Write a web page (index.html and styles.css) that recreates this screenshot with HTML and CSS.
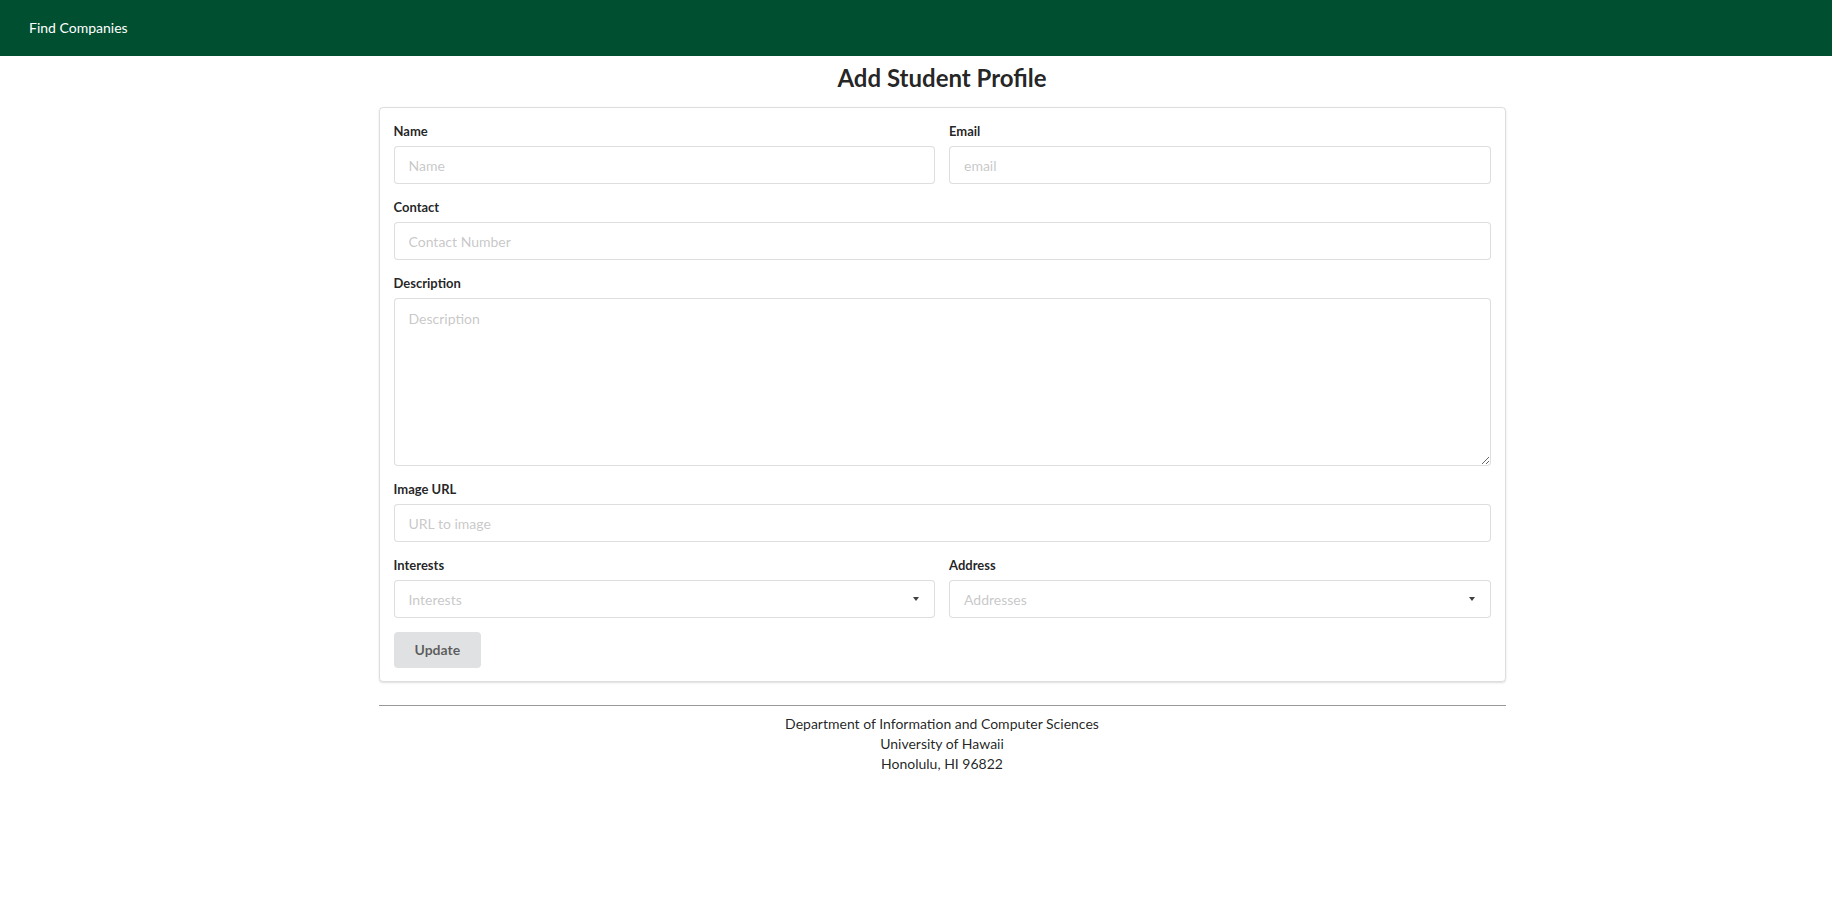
FILE: index.html
```html
<!DOCTYPE html>
<html lang="en">
<head>
<meta charset="utf-8">
<title>Add Student Profile</title>
<link rel="stylesheet" href="styles.css">
</head>
<body>
<nav class="navbar">
  <a class="nav-item">Find Companies</a>
</nav>
<main class="page">
  <div class="container">
    <h2 class="title">Add Student Profile</h2>
    <form class="card">
      <div class="fields">
        <div class="field">
          <label class="label">Name</label>
          <input class="input" type="text" placeholder="Name">
        </div>
        <div class="field">
          <label class="label">Email</label>
          <input class="input" type="text" placeholder="email">
        </div>
      </div>
      <div class="field">
        <label class="label">Contact</label>
        <input class="input" type="text" placeholder="Contact Number">
      </div>
      <div class="field">
        <label class="label">Description</label>
        <textarea class="textarea" placeholder="Description"></textarea>
      </div>
      <div class="field">
        <label class="label">Image URL</label>
        <input class="input" type="text" placeholder="URL to image">
      </div>
      <div class="fields">
        <div class="field">
          <label class="label">Interests</label>
          <div class="dropdown"><span class="default-text">Interests</span><span class="caret"></span></div>
        </div>
        <div class="field">
          <label class="label">Address</label>
          <div class="dropdown"><span class="default-text">Addresses</span><span class="caret"></span></div>
        </div>
      </div>
      <button class="btn" type="button">Update</button>
    </form>
    <footer class="footer">
      <div>Department of Information and Computer Sciences</div>
      <div>University of Hawaii</div>
      <div>Honolulu, HI 96822</div>
    </footer>
  </div>
</main>
</body>
</html>
```
FILE: styles.css
```css
* { box-sizing: border-box; }
html, body { margin: 0; padding: 0; background: #fff; }
body {
  font-family: Lato, "Noto Sans", "Liberation Sans", sans-serif;
  font-size: 14px;
  line-height: 20px;
  color: rgba(0,0,0,.87);
}
.navbar {
  height: 56px;
  background: #004f30;
  display: flex;
  align-items: center;
  padding-left: 29px;
}
.nav-item {
  color: #fff;
  font-size: 14px;
  line-height: 20px;
  padding-bottom: 1px;
}
.page {
  padding-left: 52px;
  display: flex;
  justify-content: center;
}
.container {
  width: 1127px;
}
.title {
  margin: 7px 0 14px;
  font-size: 24px;
  line-height: 30px;
  font-weight: 700;
  text-align: center;
  color: rgba(0,0,0,.87);
}
.card {
  border: 1px solid rgba(34,36,38,.15);
  border-radius: 4px;
  box-shadow: 0 1px 2px 0 rgba(34,36,38,.15);
  padding: 14px 14px 13px;
  margin: 0;
}
.fields {
  display: flex;
  gap: 14px;
}
.fields .field { flex: 1 1 0; min-width: 0; }
.field { margin-bottom: 14px; }
.label {
  display: block;
  font-size: 13px;
  line-height: 18px;
  font-weight: 700;
  margin-bottom: 6px;
  color: rgba(0,0,0,.87);
}
.input, .textarea, .dropdown {
  display: block;
  width: 100%;
  font-family: Lato, "Noto Sans", "Liberation Sans", sans-serif;
  font-size: 14px;
  color: rgba(0,0,0,.87);
  background: #fff;
  border: 1px solid rgba(34,36,38,.15);
  border-radius: 4px;
  outline: none;
  margin: 0;
}
.input {
  height: 38px;
  padding: 9.5px 14px;
  line-height: 17px;
}
.textarea {
  height: 168px;
  padding: 11px 14px;
  line-height: 18px;
  resize: vertical;
}
.input::placeholder, .textarea::placeholder { color: rgba(191,191,191,.87); opacity: 1; }
.dropdown {
  position: relative;
  height: 38px;
  padding: 12px 30px 10px 14px;
  line-height: 14px;
}
.default-text { color: rgba(191,191,191,.87); }
.caret {
  position: absolute;
  right: 15px;
  top: 16px;
  width: 0;
  height: 0;
  border-left: 3.5px solid transparent;
  border-right: 3.5px solid transparent;
  border-top: 4px solid rgba(0,0,0,.75);
}
.btn {
  display: block;
  height: 36px;
  padding: 0 21px;
  font-family: Lato, "Noto Sans", "Liberation Sans", sans-serif;
  font-size: 14px;
  font-weight: 700;
  line-height: 14px;
  color: rgba(0,0,0,.6);
  background: #e0e1e2;
  border: none;
  border-radius: 4px;
}
.footer {
  margin-top: 23px;
  border-top: 1px solid #999;
  padding-top: 8px;
  text-align: center;
  font-size: 14px;
  line-height: 20px;
  color: rgba(0,0,0,.87);
}
```
